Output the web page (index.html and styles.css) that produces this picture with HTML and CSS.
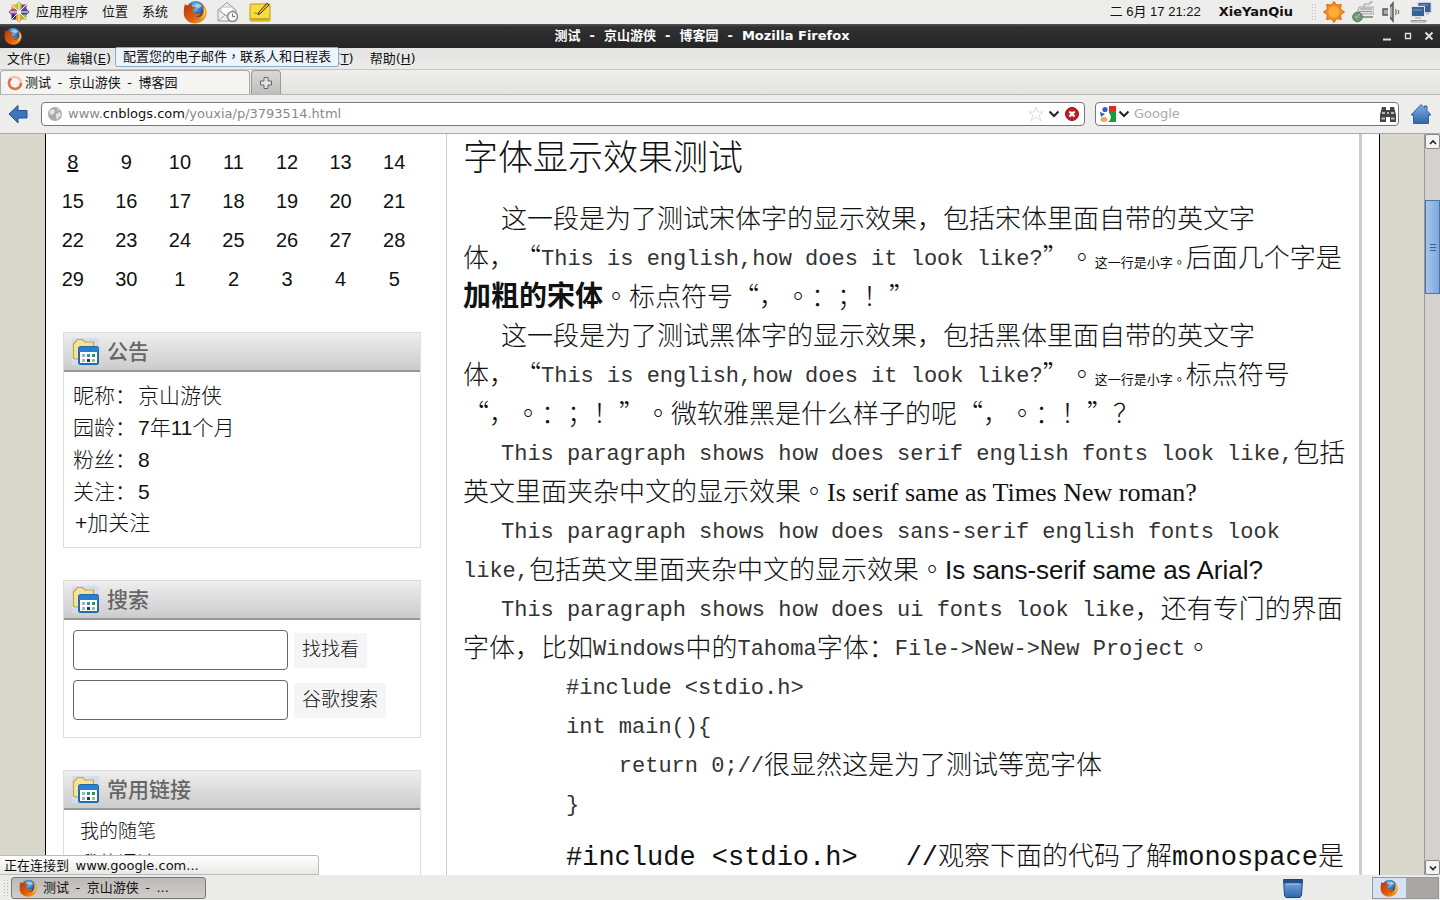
FILE: index.html
```html
<!DOCTYPE html>
<html lang="zh-CN">
<head>
<meta charset="utf-8">
<title>测试 - 京山游侠 - 博客园</title>
<link rel="stylesheet" href="styles.css">
</head>
<body>
<svg class="defs" aria-hidden="true">
  <defs>
    <radialGradient id="globe" cx="45%" cy="30%" r="60%"><stop offset="0" stop-color="#8fd6f5"/><stop offset=".6" stop-color="#2f73c0"/><stop offset="1" stop-color="#143a7c"/></radialGradient>
    <linearGradient id="fox" x1="0" y1="0" x2="1" y2="1"><stop offset="0" stop-color="#b8340c"/><stop offset=".6" stop-color="#e0620f"/><stop offset="1" stop-color="#f7b52a"/></linearGradient>
    <linearGradient id="blue" x1="0" y1="0" x2="0" y2="1"><stop offset="0" stop-color="#7fb0e0"/><stop offset="1" stop-color="#2f66ab"/></linearGradient>
    <symbol id="firefox" viewBox="0 0 24 24">
      <circle cx="12.500" cy="10.500" r="9.500" fill="url(#globe)"/>
      <path d="M13 4c2-1 5 0 6 2l-3 2-3-1z" fill="#bfe6f7" opacity=".7"/>
      <path d="M2 4c1 1 2 1.500 4 1.500C7 4 9 3 10 3 9 4 8.500 5 9 6.500c1 .5 3 .3 3.500 1C12 9 10.500 9.500 9.500 10c0 2 1 3.500 3.500 4 2 .3 3.500-1 5-.5-1 2-3 3-5.500 2.800C15 18 19 16.500 20 12c.4-3-.5-6-2-8 4 2 6 5.500 5.500 9.500C22.800 19.500 18 23.500 12 23.500S.8 19 .8 13C.8 9.500 1 7 2 4z" fill="url(#fox)"/>
      <path d="M20 6c2 5 1 10-3 13 4-1 6.500-5 5.500-9-.5-2-1.500-3-2.500-4z" fill="#fbd340"/>
    </symbol>
    <symbol id="folder" viewBox="0 0 27 27">
      <rect width="27" height="27" fill="#d5dcef"/>
      <path d="M1.500 20V6l4-4.500h5L13 4h8.500V9H9v12H3.500z" fill="#f6e39a" stroke="#c6a34c" stroke-width="1.200"/>
      <rect x="7" y="9" width="19" height="17" rx="1.500" fill="#fff" stroke="#2369ad" stroke-width="2"/>
      <path d="M7 9h19v5H7z" fill="#2c7fd0"/>
      <path d="M10 16h3v3h-3zM10 21h3v3h-3z" fill="#9db3c4"/><path d="M15 16h3v3h-3z" fill="#368cba"/><path d="M20 16h3v3h-3z" fill="#2c9450"/><path d="M15 21h3v3h-3z" fill="#24384f"/><path d="M20 21h3v3h-3z" fill="#8bc39b"/>
    </symbol>
  </defs>
</svg>

<header class="panel">
  <svg class="ico22" viewBox="0 0 22 22"><path d="M11 11L3 3h6l2-2.500L13 3h6v6l2.500 2-2.500 2v6h-6l-2 2.500L9 19H3v-6L.5 11 3 9V3z" fill="#e8e4ea"/><path d="M11 .5L14.500 4v5.500L11 10 7.500 9.500V4z" fill="#a4c639"/><path d="M3.500 3.500h5v5h-5z" fill="#f0b429"/><path d="M13.500 3.500h5v5h-5z" fill="#9b3a91"/><path d="M.5 11L4 7.500l5 1v5l-5 1z" fill="#a24a9b"/><path d="M21.500 11L18 7.500l-5 1v5l5 1z" fill="#47479a"/><path d="M3.500 13.500h5v5h-5z" fill="#28287d"/><path d="M13.500 13.500h5v5h-5z" fill="#98bf37"/><path d="M11 21.500L7.500 18l1-5h5l1 5z" fill="#e9a11b"/><path d="M4 4l14 14M18 4L4 18M11 2v18M2 11h18" stroke="#fff"/></svg>
  <nav class="panel-menu"><button>应用程序</button><button>位置</button><button>系统</button></nav>
  <div class="launchers">
    <svg class="ico24"><use href="#firefox"/></svg>
    <svg class="ico22" viewBox="0 0 22 22"><path d="M1 9l9-7.500L19 9v11H1z" fill="#eee" stroke="#999"/><path d="M4 9V6h12v5l-6 4-6-4z" fill="#fff" stroke="#bbb"/><path d="M1 9l9 6 9-6M1 20l7-6" fill="none" stroke="#aaa"/><circle cx="15.500" cy="15.500" r="5" fill="#f5f5f5" stroke="#8d8792" stroke-width="1.500"/><path d="M15.500 12.500v3h2.500" fill="none" stroke="#866" /></svg>
    <svg class="ico22" viewBox="0 0 22 22"><rect x="1" y="3" width="20" height="17" rx="1" fill="#f5dd3e" stroke="#b99a10"/><path d="M2 18h18" stroke="#c9a91e" stroke-width="2"/><path d="M5 13c2-3 3 1 5-1" fill="none" stroke="#8b7714"/><path d="M9 14l1-3 8-9 2 2-8 8z" fill="#e8a33d" stroke="#594117"/></svg>
  </div>
  <div class="tray">
    <span class="clock">二 6月 17 21:22</span>
    <strong>XieYanQiu</strong>
    <div class="tray-icons">
      <i class="grip"></i>
      <svg class="ico22" viewBox="0 0 22 22"><path d="M11 .5l2.700 3.600 4.500-.7-.7 4.500L21.500 11l-4 2.800.7 4.700-4.500-.8L11 21.500l-2.800-3.800-4.600.8.800-4.700L.5 11l3.900-3-.8-4.600 4.600.7z" fill="#f68b1f" stroke="#d96d0c"/><circle cx="11" cy="11" r="5.500" fill="#fbac3d"/></svg>
      <svg class="ico22" viewBox="0 0 22 22"><path d="M7 6h15v7H5z" fill="#ddd" stroke="#aaa"/><path d="M8 8h12M7 10.500h13M12 6V3h6V1h3" fill="none" stroke="#999"/><path d="M9 16h12" stroke="#999" stroke-width="2"/><circle cx="5.500" cy="16" r="4.800" fill="#6d9c70" stroke="#53745a"/><path d="M3 15l2 2 3-4" fill="none" stroke="#acd0aa"/></svg>
      <svg class="ico22" viewBox="0 0 22 22"><path d="M2 8h5l5-6v18l-5-6H2z" fill="#aaa" stroke="#555" stroke-width="1.400"/><path d="M8 5v12" stroke="#eee" stroke-width="2"/><path d="M14.500 8c1 2 1 4 0 6M17.500 9v4" fill="none" stroke="#777" stroke-width="1.300"/></svg>
      <svg class="ico22" viewBox="0 0 22 22"><rect x="8" y="1.500" width="13" height="10" fill="#356293" stroke="#ccd"/><rect x="1.500" y="5.500" width="13" height="10" fill="#356293" stroke="#dde"/><path d="M3 9h9M10 4h8" stroke="#7aa0c8"/><path d="M5 17h6M1 19.500h15v1.500H1zM16 13h3" stroke="#999" fill="#eee"/></svg>
    </div>
  </div>
</header>

<div class="titlebar">
  <svg class="ico18"><use href="#firefox"/></svg>
  <h1><span class="wide">测试 - 京山游侠 - 博客园 - </span>Mozilla Firefox</h1>
  <div class="win-btns">
    <button aria-label="最小化"><svg viewBox="0 0 10 10"><path d="M1 8.500h8" stroke="#ddd" stroke-width="2"/></svg></button>
    <button aria-label="最大化"><svg viewBox="0 0 10 10"><path d="M2.500 2.500h5v5h-5z" fill="none" stroke="#ddd" stroke-width="1.300"/></svg></button>
    <button aria-label="关闭"><svg viewBox="0 0 10 10"><path d="M1.500 1.500l7 7m0-7l-7 7" stroke="#ddd" stroke-width="2"/></svg></button>
  </div>
</div>

<nav class="menubar">
  <button>文件(<u>F</u>)</button><button>编辑(<u>E</u>)</button><button>查看(<u>V</u>)</button><button>历史(<u>S</u>)</button><button>书签(<u>B</u>)</button><button>工具(<u>T</u>)</button><button>帮助(<u>H</u>)</button>
  <div class="tooltip" role="tooltip">配置您的电子邮件<span class="tc" lang="zh-TW">，</span>联系人和日程表</div>
</nav>

<div class="tabs">
  <button class="tab"><svg class="ico16" viewBox="0 0 16 16"><circle cx="8" cy="8" r="6" fill="none" stroke="#f0c3b0" stroke-width="2.500"/><path d="M4 3.500A6 6 0 1 0 14 8" fill="none" stroke="#d9724d" stroke-width="2.500"/></svg>测试&ensp;-&ensp;京山游侠&ensp;-&ensp;博客园</button>
  <button class="newtab" aria-label="新标签页"><svg class="ico14" viewBox="0 0 14 14"><path d="M5 1.500h4V5h3.500v4H9v3.500H5V9H1.500V5H5z" fill="#e4e4e4" stroke="#666"/></svg></button>
</div>

<div class="navbar">
  <button aria-label="后退"><svg class="ico20" viewBox="0 0 20 20"><path d="M1 10l9-8.500v5h9v7.500h-9v5z" fill="#3d76b9" stroke="#24508a"/></svg></button>
  <div class="field url">
    <svg class="ico16" viewBox="0 0 16 16"><circle cx="8" cy="8" r="7" fill="#aaa"/><path d="M3 4l4-1 1 3-3 3-2-1zM9 8l4-2 1 3-4 5-1-3zM10 2l3 2-2 1z" fill="#e4e4e4"/></svg>
    <div class="address" role="textbox" aria-label="地址">www.<b>cnblogs.com</b>/youxia/p/3793514.html</div>
    <svg class="ico16" viewBox="0 0 16 16"><path d="M8 1l2 5h5l-4 3 2 6-5-4-5 4 2-6-4-3h5z" fill="#fff" stroke="#ddd"/></svg>
    <svg class="ico12" viewBox="0 0 12 12"><path d="M1.500 3.500L6 8l4.500-4.500" fill="none" stroke="#222" stroke-width="2"/></svg>
    <svg class="ico16" viewBox="0 0 16 16"><circle cx="8" cy="8" r="6.500" fill="#c31f24" stroke="#8f1318"/><path d="M5.500 5.500l5 5m0-5l-5 5" stroke="#fff" stroke-width="2.400"/></svg>
  </div>
  <div class="field search">
    <svg class="ico18" viewBox="0 0 18 18"><path d="M10 1h7v5h-7z" fill="#e02a1d"/><path d="M10 6h7v11H9c3-2 4-6 1-9z" fill="#1c9a3c"/><circle cx="6" cy="4.500" r="2.600" fill="#2c62c9"/><path d="M1 7l5 2-4 3z" fill="#2c62c9"/><ellipse cx="5" cy="14.500" rx="3.500" ry="2.500" fill="#f7a55a"/></svg>
    <svg class="ico12" viewBox="0 0 12 12"><path d="M1.500 3.500L6 8l4.500-4.500" fill="none" stroke="#222" stroke-width="2"/></svg>
    <input type="text" placeholder="Google" aria-label="Google">
    <svg class="ico18" viewBox="0 0 18 18"><path d="M3 2h4v3h4V2h4l2 8v7h-6v-5H7v5H1v-7z" fill="#444"/><path d="M3 8h3M12 8h3M2.500 13.500H6M12 13.500h3.500M8 8h2" stroke="#bbb" stroke-width="2"/></svg>
  </div>
  <button aria-label="主页"><svg class="ico22" viewBox="0 0 22 22"><path d="M1 12L11 1.500l3.500 3.500V3h2.500v4.500L21 12h-2.500v8.500h-15V12z" fill="url(#blue)" stroke="#31639f"/></svg></button>
</div>

<div class="viewport">
  <div class="page" id="page">
    <aside class="sidebar">
      <table class="calendar">
        <tr><td><a href="#">8</a></td><td>9</td><td>10</td><td>11</td><td>12</td><td>13</td><td>14</td></tr>
        <tr><td>15</td><td>16</td><td>17</td><td>18</td><td>19</td><td>20</td><td>21</td></tr>
        <tr><td>22</td><td>23</td><td>24</td><td>25</td><td>26</td><td>27</td><td>28</td></tr>
        <tr><td>29</td><td>30</td><td>1</td><td>2</td><td>3</td><td>4</td><td>5</td></tr>
      </table>
      <section class="module">
        <h2><svg class="ico27"><use href="#folder"/></svg>公告</h2>
        <dl class="profile">
          <div><dt>昵称：</dt><dd>京山游侠</dd></div>
          <div><dt>园龄：</dt><dd>7年11个月</dd></div>
          <div><dt>粉丝：</dt><dd>8</dd></div>
          <div><dt>关注：</dt><dd>5</dd></div>
        </dl>
        <a class="follow" href="#">+加关注</a>
      </section>
      <section class="module">
        <h2><svg class="ico27"><use href="#folder"/></svg>搜索</h2>
        <form class="finder">
          <div><input type="text" aria-label="找找看"><button type="button">找找看</button></div>
          <div><input type="text" aria-label="谷歌搜索"><button type="button">谷歌搜索</button></div>
        </form>
      </section>
      <section class="module">
        <h2><svg class="ico27"><use href="#folder"/></svg>常用链接</h2>
        <ul class="links"><li><a href="#">我的随笔</a></li><li><a href="#">我的评论</a></li></ul>
      </section>
    </aside>
    <main class="article">
      <h2>字体显示效果测试</h2>
      <p>这一段是为了测试宋体字的显示效果，包括宋体里面自带的英文字<br>体，“<span class="m">This is english,how does it look like?</span>”<span class="tc" lang="zh-TW">。</span><small>这一行是小字<span class="tc" lang="zh-TW">。</span></small>后面几个字是<br><b>加粗的宋体</b><span class="tc" lang="zh-TW">。</span>标点符号“，<span class="tc" lang="zh-TW">。</span>：；！”</p>
      <p>这一段是为了测试黑体字的显示效果，包括黑体里面自带的英文字<br>体，“<span class="m">This is english,how does it look like?</span>”<span class="tc" lang="zh-TW">。</span><small>这一行是小字<span class="tc" lang="zh-TW">。</span></small>标点符号<br>“，<span class="tc" lang="zh-TW">。</span>：；！”<span class="tc" lang="zh-TW">。</span>微软雅黑是什么样子的呢“，<span class="tc" lang="zh-TW">。</span>：！”？</p>
      <p><span class="m">This paragraph shows how does serif english fonts look like,</span>包括<br>英文里面夹杂中文的显示效果<span class="tc" lang="zh-TW">。</span><span class="serif">Is serif same as Times New roman?</span></p>
      <p><span class="m">This paragraph shows how does sans-serif english fonts look<br>like,</span>包括英文里面夹杂中文的显示效果<span class="tc" lang="zh-TW">。</span><span class="sans">Is sans-serif same as Arial?</span></p>
      <p><span class="m">This paragraph shows how does ui fonts look like</span>，还有专门的界面<br>字体，比如<span class="m">Windows</span>中的<span class="m">Tahoma</span>字体：<span class="m">File-&gt;New-&gt;New Project</span><span class="tc" lang="zh-TW">。</span></p>
      <pre><span class="m">#include &lt;stdio.h&gt;
int main(){
    return 0;//</span>很显然这是为了测试等宽字体
<span class="m">}</span></pre>
      <pre><span class="mono">#include &lt;stdio.h&gt;</span><span class="remark"><span class="mono">//</span>观察下面的代码了解<span class="mono">monospace</span>是</span></pre>
    </main>
  </div>
  <div class="scrollbar" role="scrollbar" aria-label="滚动条" aria-controls="page" aria-valuenow="10">
    <button aria-label="向上"><svg class="ico12" viewBox="0 0 12 12"><path d="M3 8l3-3 3 3" fill="none" stroke="#222" stroke-width="1.600"/></svg></button>
    <div class="track"><div class="thumb"><i></i><i></i><i></i></div></div>
    <button aria-label="向下"><svg class="ico12" viewBox="0 0 12 12"><path d="M3 4.500l3 3 3-3" fill="none" stroke="#222" stroke-width="1.600"/></svg></button>
  </div>
  <div class="status">正在连接到&ensp;www.google.com...</div>
</div>

<footer class="taskbar">
  <i class="grip"></i>
  <button class="task"><svg class="ico18"><use href="#firefox"/></svg>测试&ensp;-&ensp;京山游侠&ensp;-&ensp;...</button>
  <svg class="ico22 trash" viewBox="0 0 22 22"><path d="M1.500 2.500h19l-1 16-1.500 2H4l-1.500-2z" fill="url(#blue)" stroke="#1e4477"/><path d="M2 3h18v3.500H2z" fill="#264f86"/><path d="M4 7h14" stroke="#a9caea"/></svg>
  <div class="pager"><div class="desk"><svg class="ico18"><use href="#firefox"/></svg></div><div class="desk off"></div></div>
</footer>
</body>
</html>
```

FILE: styles.css
```css
* { box-sizing: border-box; }
body {
  margin: 0;
  height: 100vh;
  display: flex;
  flex-direction: column;
  overflow: hidden;
  background: #ededeb;
  color: #111;
  font: 13px/18px "DejaVu Sans", "Noto Sans CJK SC", sans-serif;
  text-spacing-trim: space-all;
}
.defs { position: absolute; width: 0; height: 0; }
svg { flex: none; display: block; }
button { font: inherit; color: inherit; background: none; border: 0; padding: 0; white-space: nowrap; }
.ico12 { width: 12px; height: 12px; }
.ico14 { width: 14px; height: 14px; }
.ico16 { width: 16px; height: 16px; }
.ico18 { width: 18px; height: 18px; }
.ico20 { width: 20px; height: 20px; }
.ico22 { width: 22px; height: 22px; }
.ico24 { width: 24px; height: 24px; }
.ico27 { width: 27px; height: 27px; }
.tc { font-family: "Noto Sans CJK TC", sans-serif; line-height: 1; }
.grip { width: 5px; height: 18px; background: radial-gradient(#bbb 1px, transparent 1px) 0 0 / 3px 3px; }

.panel { height: 24px; display: flex; align-items: center; padding: 0 8px; flex: none; }
.panel-menu { display: flex; gap: 14px; margin-left: 6px; }
.launchers { display: flex; align-items: center; gap: 10px; margin-left: 15px; }
.tray { margin-left: auto; display: flex; align-items: center; gap: 18px; }
.clock { font-family: "Liberation Sans", "Noto Sans CJK SC", sans-serif; }
.tray-icons { display: flex; align-items: center; gap: 7px; }

.titlebar { height: 24px; flex: none; display: flex; align-items: center; padding: 0 6px 0 4px; background: linear-gradient(#555, #303030 3px, #262626); color: #fff; }
.titlebar h1 { flex: 1; margin: 0; text-align: center; font-size: 13px; line-height: 18px; font-weight: 700; }
.wide { font-family: "DejaVu Sans Mono", "Noto Sans CJK SC", monospace; }
.win-btns { display: flex; gap: 11px; }
.win-btns svg { width: 10px; height: 10px; }

.menubar { position: relative; height: 22px; flex: none; display: flex; align-items: center; gap: 16px; padding: 0 7px; background: linear-gradient(#e4e4e3, #ebebe9); border-bottom: 1px solid #c6c6c2; }
.tooltip { position: absolute; left: 115px; top: -1px; height: 20px; padding: 0 7px; line-height: 17px; background: #eef4fb; border: 1px solid #8cabd0; border-radius: 2px; white-space: nowrap; }

.tabs { height: 25px; flex: none; display: flex; align-items: flex-end; background: linear-gradient(#efefec, #e2e2df); border-bottom: 1px solid #b5b5b2; }
.tab { width: 250px; height: 24px; display: flex; align-items: center; gap: 2px; padding-left: 6px; background: #f4f4f3; border: 1px solid #aaa; border-bottom: 0; border-radius: 4px 4px 0 0; }
.newtab { width: 30px; height: 24px; margin-left: 1px; display: grid; place-items: center; background: linear-gradient(#d8d8d6, #bebebc); border: 1px solid #999; border-bottom: 0; border-radius: 4px 4px 0 0; }

.navbar { height: 39px; flex: none; display: flex; align-items: center; padding: 0 8px; background: #ededeb; border-bottom: 1px solid #aaa; }
.field { height: 24px; display: flex; align-items: center; background: #fff; border: 1px solid #777; border-radius: 4px; }
.url { flex: 1; margin-left: 13px; padding: 0 4px 0 5px; gap: 4px; color: #888; }
.address { flex: 1; margin-left: 1px; white-space: nowrap; overflow: hidden; }
.address b { color: #111; font-weight: 400; }
.search { width: 304px; margin: 0 11px 0 10px; padding: 0 1px 0 3px; gap: 1px; }
.search input { flex: 1; min-width: 0; border: 0; outline: 0; background: none; font: inherit; padding: 0 3px; }
.search input::placeholder { color: #aaa; opacity: 1; }

.viewport { position: relative; flex: 1; min-height: 0; display: flex; background: #d9d6cb; }
.page { flex: 1; min-width: 0; margin: 0 44px 0 45px; display: flex; background: #fff; border: solid #000; border-width: 0 1px; overflow: hidden; }
.sidebar { width: 401px; flex: none; border-right: 1px solid #ccc; padding: 8px 25px 0 0; font: 20px/30px "Liberation Sans", "Noto Sans CJK SC", sans-serif; }
.calendar { width: 100%; table-layout: fixed; border-collapse: collapse; }
.calendar td { height: 39px; padding: 0; text-align: center; }
.calendar a, .links a, .follow { color: inherit; }
.module { margin: 0 0 32px 17px; border: 1px solid #ddd; }
.calendar + .module { margin-top: 34px; }
.module h2 { margin: 0; height: 39px; display: flex; align-items: center; gap: 8px; padding: 0 8px; background: linear-gradient(#eee, #ccc); border-bottom: 2px solid #999; color: #666; font-size: 21px; font-weight: 500; }
.profile { margin: 8px 9px 0; font-size: 21px; line-height: 32px; font-weight: 300; }
.profile div { display: flex; }
.profile dt { width: 65px; white-space: nowrap; }
.profile dd { margin: 0; }
.follow { display: block; margin: 0 11px 9px; font-size: 21px; font-weight: 300; text-decoration: none; }
.finder { padding: 10px 9px 17px; display: grid; gap: 10px; }
.finder div { display: flex; align-items: center; gap: 6px; }
.finder input { width: 215px; height: 40px; border: 1px solid #666; border-radius: 4px; background: #fff; }
.finder button { height: 35px; padding: 0 8px; background: #f5f5f5; font-size: 19px; font-weight: 300; }
.links { list-style: none; margin: 0; padding: 6px 16px; font-size: 19px; line-height: 32px; font-weight: 300; }
.links a { text-decoration: none; }

.article { flex: 1; min-width: 0; padding: 0 16px; margin-right: 17px; border-right: 3px solid #ccc; overflow: hidden; white-space: nowrap; color: #111; font: 300 26px/39px "Noto Sans CJK SC", sans-serif; }
.article h2 { margin: 0 0 21px; font-size: 35px; line-height: 42px; font-weight: 300; }
.article p { margin: 0; text-indent: 38px; }
.article b { font-size: 28px; line-height: 1; font-weight: 700; }
.article small { font-size: 13px; line-height: 1; font-weight: 400; }
.m { font-family: "Liberation Mono", monospace; font-size: 22px; line-height: 1; vertical-align: 2px; color: #333; }
.serif { font-family: "Liberation Serif", serif; line-height: 1; }
.sans { font-family: "Liberation Sans", sans-serif; line-height: 1; }
.article pre { margin: 0 0 13px; padding-left: 103px; font: inherit; }
.mono { font-family: "Liberation Mono", monospace; font-size: 27px; line-height: 1; }
.remark { padding-left: 48px; }

.scrollbar { width: 16px; display: flex; flex-direction: column; background: #d4d1ce; border-left: 1px solid #999; }
.scrollbar button { height: 15px; display: grid; place-items: center; background: #f3f3f2; border: 1px solid #888; border-radius: 2px; }
.track { flex: 1; padding-top: 51px; }
.thumb { height: 94px; display: flex; flex-direction: column; align-items: center; justify-content: center; gap: 2px; background: linear-gradient(90deg, #a5c6ee, #7fa8dc); border: 1px solid #4a74a8; }
.thumb i { width: 6px; height: 1px; background: #3b6294; }
.status { position: absolute; left: 0; bottom: 0; width: 319px; height: 20px; padding: 0 4px; line-height: 20px; background: linear-gradient(#fff, #e8e8e6); border: 1px solid #bbb; border-left: 0; border-radius: 0 3px 0 0; }

.taskbar { height: 25px; flex: none; display: flex; align-items: center; padding: 0 1px 0 3px; background: #ebebe9; }
.task { width: 195px; height: 22px; margin-left: 3px; display: flex; align-items: center; gap: 6px; padding: 0 7px; background: linear-gradient(#bdb9b6, #d0ccc8); border: 1px solid #777; border-radius: 3px; }
.trash { margin-left: auto; }
.pager { display: flex; width: 67px; height: 22px; margin-left: 68px; border: 1px solid #999; background: #a9a6a3; }
.desk { flex: 1; display: grid; place-items: center; background: #d5e3f5; }
.desk.off { background: #a9a6a3; }
```
